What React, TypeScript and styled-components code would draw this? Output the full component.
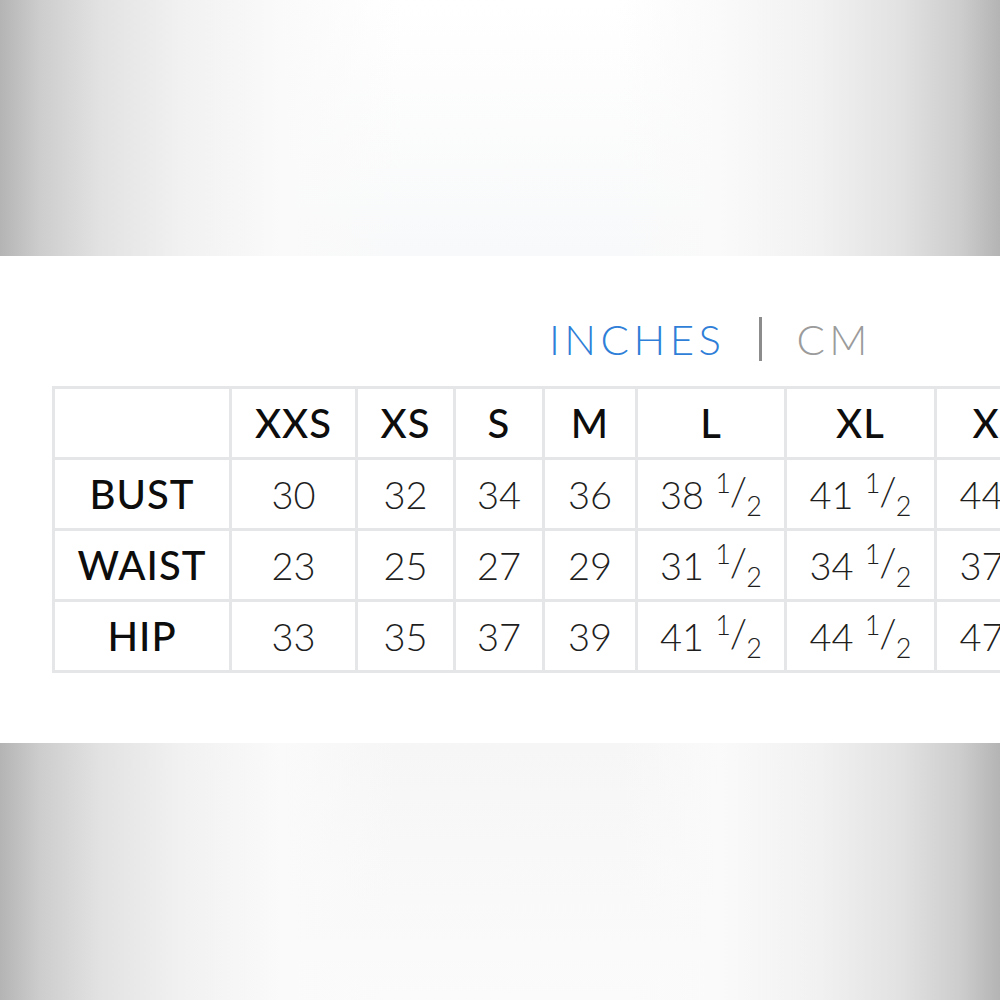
import React from 'react';
import styled, { createGlobalStyle } from 'styled-components';

const GlobalStyle = createGlobalStyle`
  html, body {
    margin: 0;
    padding: 0;
    background: #ffffff;
    overflow: hidden;
  }
  body {
    font-family: Lato, "Open Sans", sans-serif;
  }
`;

const Page = styled.div`
  width: 1000px;
  height: 1000px;
  display: flex;
  flex-direction: column;
  overflow: hidden;
`;

const Shade = styled.div<{ $bottom?: boolean }>`
  flex: 0 0 ${(p) => (p.$bottom ? '257px' : '256px')};
  background:
    linear-gradient(
      to right,
      #b4b4b4 0%,
      #cdcdcd 4%,
      #e2e2e2 10%,
      #f1f1f1 18%,
      #fafafa 28%,
      rgba(255, 255, 255, 0) 40%,
      rgba(255, 255, 255, 0) 62%,
      #fafafa 72%,
      #f1f1f1 82%,
      #e2e2e2 90%,
      #cdcdcd 96%,
      #b4b4b4 100%
    ),
    linear-gradient(
      to bottom,
      ${(p) => (p.$bottom ? '#f6f6f7, #fbfbfc' : '#ffffff, #f8f9fa')}
    );
`;

const Panel = styled.section`
  flex: 0 0 487px;
  background: #ffffff;
  display: flex;
  flex-direction: column;
  padding-top: 56px;
  box-sizing: border-box;
`;

const UnitBar = styled.div`
  display: flex;
  justify-content: flex-end;
  align-items: center;
  gap: 34px;
  padding-right: 128px;
  height: 54px;
  font-size: 42px;
  font-weight: 300;
  letter-spacing: 4.5px;
`;

const Unit = styled.span<{ $active?: boolean }>`
  color: ${(p) => (p.$active ? '#2f7fd8' : '#9b9b9b')};
`;

const Divider = styled.span`
  width: 3px;
  height: 44px;
  background: #8c8c8c;
`;

const Table = styled.div`
  margin: 20px 0 0 52px;
  display: grid;
  grid-template-columns: 174px 123px 95px 86px 90px 146px 147px 147px;
  grid-auto-rows: 68px;
  gap: 3px;
  padding: 3px;
  background: #e5e6e8;
  width: max-content;
`;

const Cell = styled.div<{ $head?: boolean }>`
  background: #ffffff;
  display: flex;
  align-items: center;
  justify-content: center;
  font-size: ${(p) => (p.$head ? '40px' : '38px')};
  font-weight: ${(p) => (p.$head ? 500 : 300)};
  color: ${(p) => (p.$head ? '#0d0d0d' : '#1e1e1e')};
  letter-spacing: ${(p) => (p.$head ? '1px' : '0')};
  white-space: nowrap;
`;

const Frac = styled.span`
  display: inline-flex;
  align-items: flex-start;
  margin-left: 11px;
  font-size: 38px;
  height: 46px;
`;

const Num = styled.span`
  font-size: 27px;
  line-height: 1;
  margin-top: -2px;
`;

const Slash = styled.span`
  font-size: 40px;
  line-height: 1;
  margin: 0 -1px;
`;

const Den = styled.span`
  font-size: 27px;
  line-height: 1;
  margin-top: 21px;
`;

type Value = [number, boolean?];

const sizes = ['XXS', 'XS', 'S', 'M', 'L', 'XL', 'XXL'];

const rows: { label: string; values: Value[] }[] = [
  { label: 'BUST', values: [[30], [32], [34], [36], [38, true], [41, true], [44, true]] },
  { label: 'WAIST', values: [[23], [25], [27], [29], [31, true], [34, true], [37, true]] },
  { label: 'HIP', values: [[33], [35], [37], [39], [41, true], [44, true], [47, true]] },
];

const Measure = ({ value }: { value: Value }) => (
  <Cell>
    {value[0]}
    {value[1] && (
      <Frac>
        <Num>1</Num>
        <Slash>/</Slash>
        <Den>2</Den>
      </Frac>
    )}
  </Cell>
);

export default function App() {
  return (
    <Page>
      <GlobalStyle />
      <Shade />
      <Panel>
        <UnitBar>
          <Unit $active>INCHES</Unit>
          <Divider />
          <Unit>CM</Unit>
        </UnitBar>
        <Table>
          <Cell $head />
          {sizes.map((s) => (
            <Cell key={s} $head>
              {s}
            </Cell>
          ))}
          {rows.map((row) => (
            <React.Fragment key={row.label}>
              <Cell $head>{row.label}</Cell>
              {row.values.map((v, i) => (
                <Measure key={i} value={v} />
              ))}
            </React.Fragment>
          ))}
        </Table>
      </Panel>
      <Shade $bottom />
    </Page>
  );
}
